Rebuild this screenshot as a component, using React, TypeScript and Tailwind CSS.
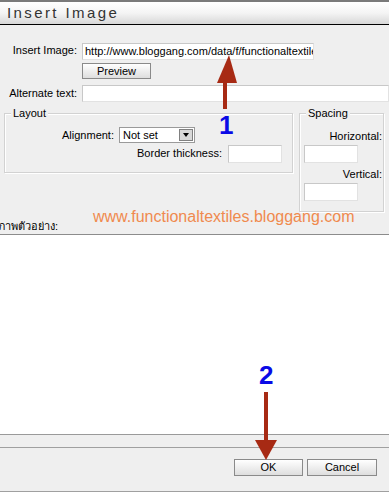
const font = "font-['Liberation_Sans','Arial',sans-serif]";

function Field({ className = "", value = "" }: { className?: string; value?: string }) {
  return (
    <div
      className={`bg-white border border-[#e2e2e2] border-t-[#c8c8c8] border-l-[#c8c8c8] text-[11px] leading-[15px] px-[2px] overflow-hidden whitespace-nowrap text-black ${className}`}
    >
      {value}
    </div>
  );
}

function Btn({ label, className = "" }: { label: string; className?: string }) {
  return (
    <div
      className={`flex items-center justify-center bg-gradient-to-b from-white to-[#dedede] border border-[#8a8a8a] text-[11px] text-black ${className}`}
    >
      {label}
    </div>
  );
}

function Group({ title, className = "", children }: { title: string; className?: string; children?: React.ReactNode }) {
  return (
    <div className={`border border-[#d2d2d2] shadow-[inset_1px_1px_0_#fff,1px_1px_0_#fff] ${className}`}>
      <span className="block w-fit -mt-[7px] ml-[6px] px-[2px] bg-[#efefef] text-[11px] leading-[13px] text-black">
        {title}
      </span>
      {children}
    </div>
  );
}

export default function App() {
  return (
    <div className={`relative w-[389px] h-[492px] overflow-hidden bg-[#efefef] ${font}`}>
      {/* title bar */}
      <div className="h-[25px] border-t-2 border-t-[#7a7a7a] border-b border-b-black bg-gradient-to-b from-white via-[#f4f4f4] to-[#d8d8d8] flex items-center pl-[7px]">
        <span className="text-[15px] tracking-[2.4px] text-[#333]">Insert Image</span>
      </div>

      {/* insert image row */}
      <div className="flex items-start mt-[18px]">
        <span className="w-[77px] text-right text-[11px] leading-[13px] pt-[1px] text-black">Insert Image:</span>
        <Field className="ml-[5px] w-[232px] h-[17px]" value="http://www.bloggang.com/data/f/functionaltextiles/picture/1234.jpg" />
      </div>
      <Btn label="Preview" className="ml-[82px] mt-[3px] w-[69px] h-[16px]" />

      {/* alternate text row */}
      <div className="flex items-center mt-[6px]">
        <span className="w-[77px] text-right text-[11px] leading-[13px] text-black">Alternate text:</span>
        <Field className="ml-[5px] flex-1 h-[17px]" />
      </div>

      {/* layout + spacing */}
      <div className="flex items-start mt-[11px]">
        <Group title="Layout" className="ml-[4px] w-[289px] h-[60px]">
          <div className="flex items-center mt-[7px]">
            <span className="w-[109px] text-right text-[11px] text-black">Alignment:</span>
            <div className="ml-[5px] w-[76px] h-[16px] bg-white border border-[#9a9a9a] flex items-center justify-between">
              <span className="text-[11px] pl-[3px] text-black leading-none">Not set</span>
              <span className="w-[14px] h-[12px] mr-[1px] bg-[#d8d8d8] border border-[#808080] flex items-center justify-center">
                <span className="border-l-[3px] border-r-[3px] border-t-[4px] border-l-transparent border-r-transparent border-t-black" />
              </span>
            </div>
          </div>
          <div className="flex items-center mt-[1px]">
            <span className="w-[217px] text-right text-[11px] text-black">Border thickness:</span>
            <Field className="ml-[6px] w-[54px] h-[18px]" />
          </div>
        </Group>

        <Group title="Spacing" className="ml-[6px] w-[85px] h-[99px]">
          <div className="text-right text-[11px] leading-[13px] pr-[1px] mt-[10px] text-black">Horizontal:</div>
          <Field className="ml-[4px] mt-[2px] w-[54px] h-[18px]" />
          <div className="text-right text-[11px] leading-[13px] pr-[1px] mt-[5px] text-black">Vertical:</div>
          <Field className="ml-[4px] mt-[2px] w-[54px] h-[18px]" />
        </Group>
      </div>

      {/* preview label */}
      <div className="mt-[8px] -ml-[2px] text-[11px] leading-[13px] text-black font-['Liberation_Sans','Noto_Sans','DejaVu_Sans',sans-serif]">
        ภาพตัวอย่าง:
      </div>

      {/* preview area */}
      <div className="mt-[1px] h-[201px] bg-white border-t border-t-[#8c8c8c] border-b border-b-[#9a9a9a]" />

      {/* footer */}
      <div className="mt-[12px] h-[45px] border-t border-t-[#a0a0a0] border-b border-b-[#a0a0a0] flex items-start justify-end pt-[11px] pr-[12px] gap-[4px]">
        <Btn label="OK" className="w-[69px] h-[17px]" />
        <Btn label="Cancel" className="w-[70px] h-[17px]" />
      </div>

      {/* watermark */}
      <span className="absolute left-[93px] top-[208px] text-[16px] leading-[18px] text-[#f08a4e] whitespace-nowrap">
        www.functionaltextiles.bloggang.com
      </span>

      {/* annotation 1 */}
      <svg className="absolute left-[215px] top-[54px]" width="24" height="56" viewBox="0 0 24 56">
        <polygon points="14,1 2,29 22,29" fill="#a72a14" />
        <rect x="8" y="28" width="4" height="27" fill="#a72a14" />
      </svg>
      <span className="absolute left-[219px] top-[112px] text-[26px] leading-[26px] font-bold text-[#0a0ae6]">1</span>

      {/* annotation 2 */}
      <span className="absolute left-[259px] top-[362px] text-[26px] leading-[26px] font-bold text-[#0a0ae6]">2</span>
      <svg className="absolute left-[254px] top-[391px]" width="24" height="70" viewBox="0 0 24 70">
        <rect x="10" y="1" width="4" height="49" fill="#a72a14" />
        <polygon points="1,49 23,49 12,69" fill="#a72a14" />
      </svg>
    </div>
  );
}
